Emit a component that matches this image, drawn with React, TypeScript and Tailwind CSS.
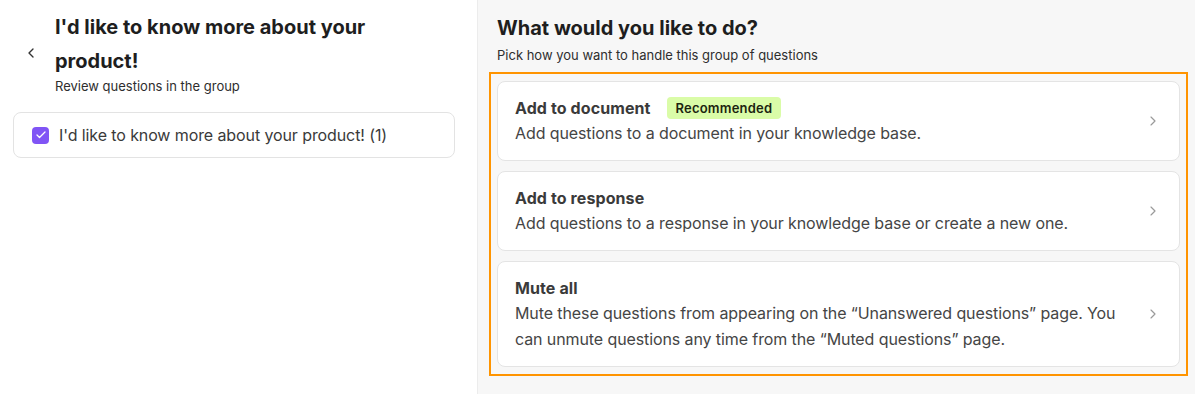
import { ChevronLeft, ChevronRight, Check } from 'lucide-react';

const options = [
  {
    title: 'Add to document',
    badge: 'Recommended',
    description: 'Add questions to a document in your knowledge base.',
  },
  {
    title: 'Add to response',
    description: 'Add questions to a response in your knowledge base or create a new one.',
  },
  {
    title: 'Mute all',
    description:
      'Mute these questions from appearing on the \u201cUnanswered questions\u201d page. You can unmute questions any time from the \u201cMuted questions\u201d page.',
  },
];

function OptionCard({ title, badge, description }: { title: string; badge?: string; description: string }) {
  return (
    <div className="flex items-center rounded-lg border border-[#e4e4e4] bg-white py-[14px] pl-[17px] pr-[18px]">
      <div className="flex-1 pr-3">
        <div className="flex items-center gap-[16px]">
          <span className="text-[16px] font-bold leading-6 tracking-[0.1px] text-[#3a3a3a]">{title}</span>
          {badge && (
            <span className="rounded-[4px] bg-[#dafca8] px-[9px] py-[2px] text-[13px] font-semibold leading-[18px] tracking-[0.2px] text-[#1c2410]">
              {badge}
            </span>
          )}
        </div>
        <p className="text-[16px] leading-[26px] tracking-[-0.1px] text-[#454545]">{description}</p>
      </div>
      <ChevronRight className="h-4 w-4 text-[#9a9a9a]" strokeWidth={1.75} />
    </div>
  );
}

export default function App() {
  return (
    <div className="flex h-[394px] w-[1195px] font-['Inter',sans-serif] antialiased">
      <div className="w-[478px] shrink-0 border-r border-[#ececec] bg-white pl-[13px] pr-[22px] pt-[10px]">
        <div className="flex items-center">
          <div className="flex w-[42px] justify-start pl-[10px]">
            <ChevronLeft className="h-4 w-4 text-[#333]" strokeWidth={2} />
          </div>
          <div>
            <h1 className="w-[370px] text-[20px] font-bold leading-[34px] text-[#1e1e1e]">
              I'd like to know more about your product!
            </h1>
            <p className="-mt-[1px] text-[13px] leading-[18px] text-[#2e2e2e]">Review questions in the group</p>
          </div>
        </div>
        <div className="mt-[17px] flex h-[46px] items-center gap-[10px] rounded-lg border border-[#e3e3e3] bg-white pl-[18px]">
          <span className="flex h-[17px] w-[17px] items-center justify-center rounded-[4px] bg-[#8054f5]">
            <Check className="h-3 w-3 text-white" strokeWidth={2.5} />
          </span>
          <span className="text-[16px] tracking-[-0.1px] text-[#3a3a3a]">I'd like to know more about your product! (1)</span>
        </div>
      </div>
      <div className="flex-1 bg-[#f7f7f7] pl-[19px] pr-[15px] pt-[13px]">
        <h2 className="text-[20px] font-bold leading-[30px] text-[#1e1e1e]">What would you like to do?</h2>
        <p className="mt-[3px] text-[13px] leading-[18px] text-[#2e2e2e]">Pick how you want to handle this group of questions</p>
        <div className="-mx-[8px] mt-[8px] flex flex-col gap-[10px] border-2 border-[#ff9400] px-[6px] pb-[7px] pt-[7px]">
          {options.map((o) => (
            <OptionCard key={o.title} {...o} />
          ))}
        </div>
      </div>
    </div>
  );
}
